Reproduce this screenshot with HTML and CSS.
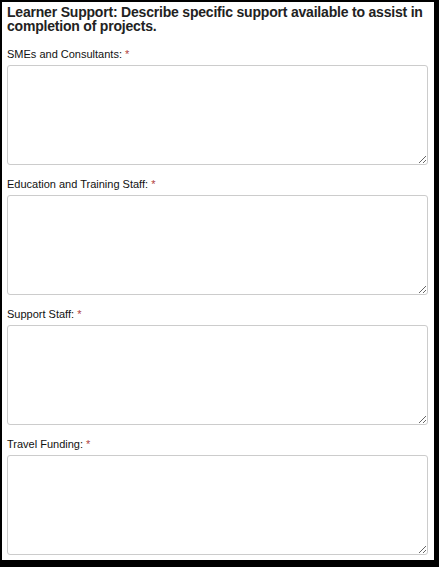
FILE: index.html
```html
<!DOCTYPE html>
<html lang="en">
<head>
    <meta charset="UTF-8">
    <title>Learner Support</title>
    <link rel="stylesheet" href="styles.css">
</head>
<body>
    <div class="panel">
        <h2>Learner Support: Describe specific support available to assist in completion of projects.</h2>
        <div class="field">
            <label for="smes">SMEs and Consultants: <span class="req">*</span></label>
            <textarea id="smes"></textarea>
        </div>
        <div class="field">
            <label for="edu">Education and Training Staff: <span class="req">*</span></label>
            <textarea id="edu"></textarea>
        </div>
        <div class="field">
            <label for="support">Support Staff: <span class="req">*</span></label>
            <textarea id="support"></textarea>
        </div>
        <div class="field">
            <label for="travel">Travel Funding: <span class="req">*</span></label>
            <textarea id="travel"></textarea>
        </div>
    </div>
</body>
</html>
```

FILE: styles.css
```css
html, body {
    margin: 0;
    padding: 0;
    background-color: #000;
    height: 100%;
}
body {
    font-family: 'Liberation Sans', Arial, sans-serif;
    color: #222;
    padding: 2px 5px 7px 2px;
    box-sizing: border-box;
}
.panel {
    background-color: #fff;
    height: 100%;
    box-sizing: border-box;
    padding: 3px 6px 0 5px;
    overflow: hidden;
}
.panel h2 {
    margin: 0 0 14px 0;
    font-size: 14px;
    line-height: 14px;
    font-weight: bold;
    letter-spacing: -0.2px;
    color: #222;
}
.field {
    margin-bottom: 12px;
}
.field label {
    display: block;
    font-size: 11px;
    font-weight: normal;
    line-height: 14px;
    margin-bottom: 4px;
    color: #111;
}
.req {
    color: #b0413e;
}
.field textarea {
    display: block;
    width: 100%;
    height: 100px;
    box-sizing: border-box;
    border: 1px solid #ccc;
    border-radius: 3px;
    margin: 0;
    padding: 4px;
    font-family: inherit;
    resize: vertical;
}
```
